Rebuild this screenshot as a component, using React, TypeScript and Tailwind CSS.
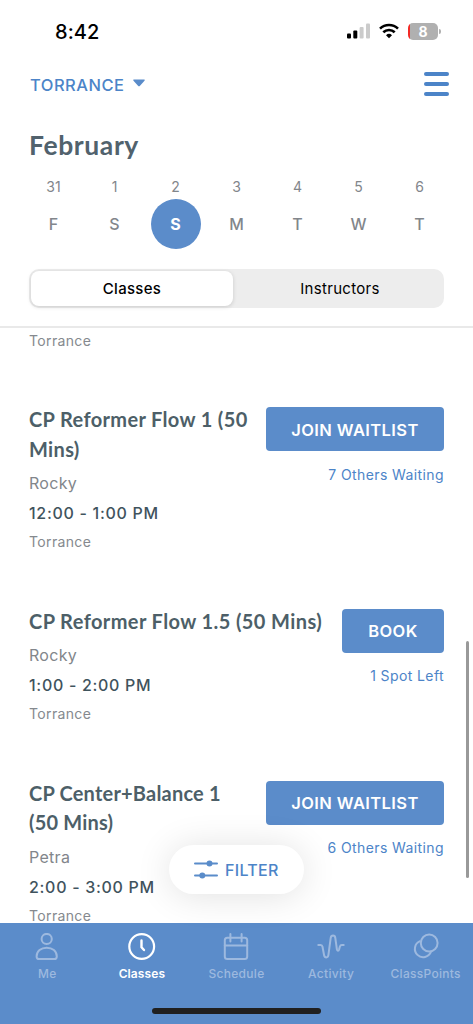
import type { ReactNode } from 'react';

type ClassItem = {
  title: string[];
  titleSpacing: string;
  instructor: string;
  time: string;
  location: string;
  action: string;
  actionWidth: string;
  note: string;
};

const DAYS = [
  { date: 31, day: 'F' },
  { date: 1, day: 'S' },
  { date: 2, day: 'S' },
  { date: 3, day: 'M' },
  { date: 4, day: 'T' },
  { date: 5, day: 'W' },
  { date: 6, day: 'T' },
];

const CLASSES: ClassItem[] = [
  {
    title: ['CP Reformer Flow 1 (50', 'Mins)'],
    titleSpacing: 'tracking-[0.35px]',
    instructor: 'Rocky',
    time: '12:00 - 1:00 PM',
    location: 'Torrance',
    action: 'JOIN WAITLIST',
    actionWidth: 'w-[178px]',
    note: '7 Others Waiting',
  },
  {
    title: ['CP Reformer Flow 1.5 (50 Mins)'],
    titleSpacing: 'tracking-[0.4px]',
    instructor: 'Rocky',
    time: '1:00 - 2:00 PM',
    location: 'Torrance',
    action: 'BOOK',
    actionWidth: 'w-[102px]',
    note: '1 Spot Left',
  },
  {
    title: ['CP Center+Balance 1', '(50 Mins)'],
    titleSpacing: 'tracking-[0.2px]',
    instructor: 'Petra',
    time: '2:00 - 3:00 PM',
    location: 'Torrance',
    action: 'JOIN WAITLIST',
    actionWidth: 'w-[178px]',
    note: '6 Others Waiting',
  },
];

function StatusBar() {
  return (
    <div className="flex h-[62px] items-center justify-between pl-[55px] pr-[32px]">
      <span className="pt-px text-[20px] font-medium leading-6 tracking-[0.1px] text-black">8:42</span>
      <div className="flex items-center gap-[9px]">
        <svg width="24" height="16" viewBox="0 0 24 16">
          <rect x="1" y="10.5" width="4" height="5" rx="1" fill="#000" />
          <rect x="7.300" y="7.500" width="4" height="8" rx="1" fill="#000" />
          <rect x="13.600" y="4" width="4" height="11.500" rx="1" fill="#cbcbcb" />
          <rect x="20" y="0.500" width="4" height="15" rx="1" fill="#cbcbcb" />
        </svg>
        <svg width="20" height="16" viewBox="0 0 20 16" fill="none" stroke="#000" strokeWidth="2.6">
          <path d="M1 5.6a13 13 0 0 1 18 0" />
          <path d="M4.3 9.3a8.2 8.2 0 0 1 11.4 0" />
          <path d="M10 15.2l-3-3a4.3 4.3 0 0 1 6 0z" fill="#000" stroke="none" />
        </svg>
        <div className="flex items-center gap-px">
          <div className="flex h-[17px] w-[30px] items-center justify-center overflow-hidden rounded-[5px] bg-linear-to-r from-[#f32a26] from-[2px] to-[#b0b0b0] to-[2px] text-[14px] font-bold text-white">
            8
          </div>
          <div className="h-[5px] w-[2px] rounded-r-full bg-[#b0b0b0]" />
        </div>
      </div>
    </div>
  );
}

function Header() {
  return (
    <header className="h-[328px] shrink-0 border-b-2 border-[#e9e9e9] bg-white">
      <StatusBar />
      <div className="flex h-[44px] items-center justify-between pl-[30px] pr-[24px]">
        <button className="flex items-center gap-[8px] pt-[2px] text-[16.5px] font-medium tracking-[0.5px] text-[#4c84c8]">
          TORRANCE
          <svg width="12" height="8" viewBox="0 0 12 8" className="-mt-[4px]">
            <path d="M1 .5h10c.8 0 1 .7.5 1.2L7 6.8a1.4 1.4 0 0 1-2 0L.5 1.7C0 1.2.2.5 1 .5z" fill="#5a8cca" />
          </svg>
        </button>
        <div className="flex flex-col gap-[6px]">
          <div className="h-[4px] w-[25px] rounded-full bg-[#4c84c8]" />
          <div className="h-[4px] w-[25px] rounded-full bg-[#4c84c8]" />
          <div className="h-[4px] w-[25px] rounded-full bg-[#4c84c8]" />
        </div>
      </div>
      <h1 className="mt-[23px] pl-[29px] font-[Lato] text-[26.5px] font-bold leading-8 tracking-[0.6px] text-[#51626d]">
        February
      </h1>
      <div className="mx-[23px] mt-[15px] grid grid-cols-7">
        {DAYS.map(({ date, day }) => (
          <div key={date} className="flex flex-col items-center">
            <span className="h-[23px] text-[14px] leading-[22px] text-[#82868b]">{date}</span>
            {date === 2 ? (
              <span className="flex size-[50px] items-center justify-center rounded-full bg-[#5b8cca] text-[16px] font-bold text-white">
                {day}
              </span>
            ) : (
              <span className="flex size-[50px] items-center justify-center text-[16px] font-medium text-[#82868b]">
                {day}
              </span>
            )}
          </div>
        ))}
      </div>
      <div className="ml-[29px] mt-[20px] flex h-[39px] w-[415px] rounded-[10px] bg-[#ededed] p-[2px] text-[15px] tracking-[0.3px] text-black">
        <div className="flex w-[202px] items-center justify-center rounded-[8px] bg-white pt-px font-medium shadow-[0_1px_4px_rgba(0,0,0,0.15)]">
          Classes
        </div>
        <div className="flex flex-1 items-center justify-center pl-[5px] pt-px">Instructors</div>
      </div>
    </header>
  );
}

function ClassRow({ item }: { item: ClassItem }) {
  return (
    <article className="mb-[50.5px] flex shrink-0 justify-between px-[29px]">
      <div className="flex flex-col">
        <h2 className={`mb-1 whitespace-nowrap font-[Lato] text-[20px] font-bold leading-[29.5px] text-[#4d5f68] ${item.titleSpacing}`}>
          {item.title.map((line) => (
            <span key={line} className="block">{line}</span>
          ))}
        </h2>
        <p className="text-[16px] leading-[30px] tracking-[0.3px] text-[#82868b]">{item.instructor}</p>
        <p className="text-[16px] font-medium leading-[30px] tracking-[0.7px] text-[#3f535d]">{item.time}</p>
        <p className="text-[14px] leading-[28px] tracking-[0.35px] text-[#85898e]">{item.location}</p>
      </div>
      <div className="flex flex-col items-end pt-[2px]">
        <button
          className={`h-[44px] rounded-[4px] bg-[#5b8cca] pt-[2px] text-[16.5px] font-semibold tracking-[0.4px] text-white ${item.actionWidth}`}
        >
          {item.action}
        </button>
        <span className="mt-[12.5px] text-[14px] leading-[22px] tracking-[0.4px] text-[#4c84c8]">{item.note}</span>
      </div>
    </article>
  );
}

function Tab({ label, active, children }: { label: string; active?: boolean; children: ReactNode }) {
  return (
    <div className={`flex w-1/5 flex-col items-center ${active ? 'text-white' : 'text-[#9db9df]'}`}>
      <svg
        width="28"
        height="28"
        viewBox="0 0 28 28"
        fill="none"
        stroke="currentColor"
        strokeWidth="2"
        strokeLinecap="round"
        strokeLinejoin="round"
      >
        {children}
      </svg>
      <span className={`mt-[4px] text-[12px] leading-[18px] ${active ? 'font-semibold tracking-[0.1px]' : 'font-medium tracking-[0.3px]'}`}>
        {label}
      </span>
    </div>
  );
}

function TabBar() {
  return (
    <nav className="relative h-[101px] shrink-0 bg-[#5b8cca] pt-[10px]">
      <div className="flex">
        <Tab label="Me">
          <circle cx="13.7" cy="6" r="5.1" />
          <path d="M6.200 26h15c1.700 0 2.600-1 2.600-2.600 0-5.200-4.400-8.700-10.100-8.700S3.600 18.200 3.600 23.400c0 1.600.9 2.600 2.600 2.600z" />
        </Tab>
        <Tab label="Classes" active>
          <circle cx="13.700" cy="13.500" r="12.400" strokeWidth="2.200" />
          <path d="M13.500 7.500v6.800l2.500 2.700" strokeWidth="2.400" />
        </Tab>
        <Tab label="Schedule">
          <rect x="2.800" y="4.800" width="22.400" height="21.200" rx="2.500" />
          <path d="M2.800 12.500h22.400M8.400 1v7.500M19.600 1v7.500" />
        </Tab>
        <Tab label="Activity">
          <path d="M1.300 12h2.300c1.100 0 1.700.6 1.900 1.800l1.600 8.400c.6 2.900 3.900 2.900 4.300 0l2.300-17.300c.5-3.200 4.200-3.200 4.600 0l1.600 11.400c.3 1.800 1.700 1.800 2.200.2l.8-2.900c.3-1.100 1-1.600 2-1.600h1.800" />
        </Tab>
        <Tab label="ClassPoints">
          <circle cx="17.200" cy="10" r="8.400" />
          <path d="M8 8.200A8.300 8.300 0 1 0 19 18.700" />
        </Tab>
      </div>
      <div className="absolute bottom-[10px] left-[152px] h-[6px] w-[169px] rounded-full bg-[#202020]" />
    </nav>
  );
}

export default function App() {
  return (
    <div className="relative flex h-[1024px] w-[473px] flex-col overflow-hidden bg-white font-[Inter,sans-serif]">
      <Header />
      <main className="flex min-h-0 flex-1 flex-col overflow-hidden">
        <p className="-mt-[1.5px] mb-[50.5px] shrink-0 pl-[29px] text-[14px] leading-[28px] tracking-[0.35px] text-[#85898e]">
          Torrance
        </p>
        {CLASSES.map((item) => (
          <ClassRow key={item.time} item={item} />
        ))}
      </main>
      <TabBar />
      <div className="absolute right-[4px] top-[641px] h-[237px] w-[3px] rounded-full bg-[#999]" />
      <button className="absolute left-[169px] top-[845px] flex h-[49px] w-[135px] items-center gap-[7px] rounded-full bg-white pl-[25px] text-[16px] font-medium tracking-[0.3px] text-[#4c84c8] shadow-[0_2px_36px_rgba(0,0,0,0.12)]">
        <svg width="24" height="20" viewBox="0 0 24 20" fill="#5a8cca" stroke="#5a8cca" strokeWidth="2" strokeLinecap="round">
          <path d="M1 3.500h22M1 15.500h22" />
          <circle cx="15.500" cy="3.500" r="2" />
          <circle cx="8.300" cy="15.500" r="2" />
        </svg>
        FILTER
      </button>
    </div>
  );
}
